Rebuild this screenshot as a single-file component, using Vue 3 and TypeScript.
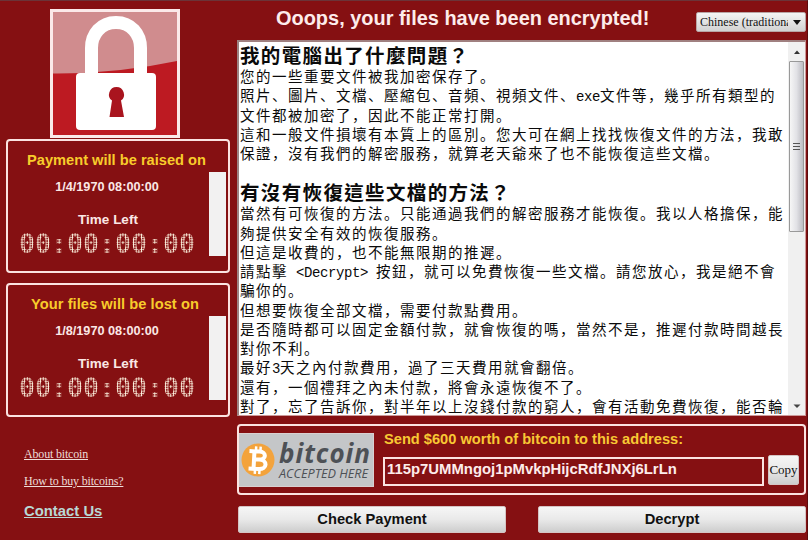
<script setup lang="ts">
interface Timer { title: string; date: string; left: string }
interface Section { heading: string; lines: string[] }
interface Run { text: string; latin: boolean }

const timers: Timer[] = [
  { title: 'Payment will be raised on', date: '1/4/1970 08:00:00', left: '00:00:00:00' },
  { title: 'Your files will be lost on', date: '1/8/1970 08:00:00', left: '00:00:00:00' },
]

const sections: Section[] = [
  {
    heading: '我的電腦出了什麼問題？',
    lines: [
      '您的一些重要文件被我加密保存了。',
      '照片、圖片、文檔、壓縮包、音頻、視頻文件、exe文件等，幾乎所有類型的',
      '文件都被加密了，因此不能正常打開。',
      '這和一般文件損壞有本質上的區別。您大可在網上找找恢復文件的方法，我敢',
      '保證，沒有我們的解密服務，就算老天爺來了也不能恢復這些文檔。',
    ],
  },
  {
    heading: '有沒有恢復這些文檔的方法？',
    lines: [
      '當然有可恢復的方法。只能通過我們的解密服務才能恢復。我以人格擔保，能',
      '夠提供安全有效的恢復服務。',
      '但這是收費的，也不能無限期的推遲。',
      '請點擊 <Decrypt> 按鈕，就可以免費恢復一些文檔。請您放心，我是絕不會',
      '騙你的。',
      '但想要恢復全部文檔，需要付款點費用。',
      '是否隨時都可以固定金額付款，就會恢復的嗎，當然不是，推遲付款時間越長',
      '對你不利。',
      '最好3天之內付款費用，過了三天費用就會翻倍。',
      '還有，一個禮拜之內未付款，將會永遠恢復不了。',
      '對了，忘了告訴你，對半年以上沒錢付款的窮人，會有活動免費恢復，能否輪',
    ],
  },
]

const runs = (line: string): Run[] =>
  (line.match(/[ -~]+|[^ -~]+/g) ?? []).map((text) => ({ text, latin: /^[ -~]/.test(text) }))
</script>

<template>
  <main class="window">
    <aside class="side">
      <svg class="lock" viewBox="0 0 130 129">
        <rect width="130" height="129" fill="#fbe9e9" />
        <rect x="3" y="3" width="124" height="123" fill="#bd1a22" />
        <path d="M3 3H127V52Q66 65 3 64.500Z" fill="#d08c8e" />
        <path d="M41.500 66V39C41.500 25 51 13.500 66 13.500S90.500 25 90.500 39V66" fill="none" stroke="#fff" stroke-width="13" />
        <rect x="26" y="64" width="80" height="57" rx="4" fill="#fff" />
        <path d="M66.500 78a7.500 7.500 0 0 1 4.500 13.500L74 108H59.500L62 91.500A7.500 7.500 0 0 1 66.500 78Z" fill="#a9141e" />
      </svg>

      <section v-for="t in timers" :key="t.title" class="timer">
        <div class="timer-info">
          <h2>{{ t.title }}</h2>
          <p class="date">{{ t.date }}</p>
          <p class="label">Time Left</p>
          <p class="clock">{{ t.left }}</p>
        </div>
        <div class="gauge"></div>
      </section>

      <nav class="links">
        <a class="about">About bitcoin</a>
        <a class="how">How to buy bitcoins?</a>
        <a class="contact">Contact Us</a>
      </nav>
    </aside>

    <div class="content">
      <header class="top">
        <h1>Ooops, your files have been encrypted!</h1>
        <div class="select">
          <span class="select-text">Chinese (traditional)</span>
          <svg class="caret" viewBox="0 0 8 5"><path d="M0 0H8L4 5Z" fill="#111" /></svg>
        </div>
      </header>

      <div class="message">
        <article class="text">
          <section v-for="s in sections" :key="s.heading" class="block">
            <h3>{{ s.heading }}</h3>
            <p v-for="line in s.lines" :key="line"><span
              v-for="(r, i) in runs(line)" :key="i" :class="{ latin: r.latin }">{{ r.text }}</span></p>
          </section>
        </article>
        <div class="scrollbar">
          <svg class="arrow" viewBox="0 0 16 19"><path d="M5 12L8 8.500L11 12Z" fill="#333" /></svg>
          <div class="thumb"><i></i><i></i><i></i></div>
          <svg class="arrow" viewBox="0 0 16 19"><path d="M4.500 8.500L8 12L11.500 8.500Z" fill="#444" /></svg>
        </div>
      </div>

      <section class="payment">
        <div class="bitcoin">
          <svg class="coin" viewBox="0 0 34 36">
            <circle cx="17" cy="18" r="16.500" fill="#f3a33c" />
            <g fill="none" stroke="#fff" transform="rotate(3 17 18)">
              <path d="M8 9.500H18C25.500 9.500 25.500 17.500 18 17.500H13.500M18 17.500C27 17.500 27 27 18 27H8M13 9.500V27" stroke-width="4" />
              <path d="M14.500 4.500V9M19 4.500V9M14.500 27V32M19 27V32" stroke-width="2.500" />
            </g>
          </svg>
          <div class="bitcoin-text"><b>bitcoin</b><span>ACCEPTED HERE</span></div>
        </div>
        <div class="pay-info">
          <h2>Send $600 worth of bitcoin to this address:</h2>
          <div class="pay-row">
            <div class="address">115p7UMMngoj1pMvkpHijcRdfJNXj6LrLn</div>
            <button class="copy">Copy</button>
          </div>
        </div>
      </section>

      <footer class="actions">
        <button class="action">Check Payment</button>
        <button class="action">Decrypt</button>
      </footer>
    </div>
  </main>
</template>

<style>
body { margin: 0; background: #851012; }
</style>

<style scoped>
* { box-sizing: border-box; }
h1, h2, h3, p { margin: 0; }
.window {
  width: 808px; height: 540px; overflow: hidden; display: flex;
  background: #851012; color: #fff;
  border-top: 1px solid #6b3438; border-right: 1px solid #5d0b0d;
  font-family: "Liberation Sans", Arial, sans-serif; white-space: nowrap;
}
.side { width: 237px; flex: none; padding: 8px 7px 0 6px; display: flex; flex-direction: column; }
.lock { width: 130px; height: 129px; margin-left: 44px; flex: none; display: block; }
.timer {
  height: 134px; margin-top: 1px; flex: none; border: 2px solid #fbe3e1; border-radius: 4px;
  display: flex; justify-content: space-between; padding-right: 2px;
}
.timer + .timer { margin-top: 10px; }
.timer-info { width: 198px; }
.timer h2 { font-size: 14.650px; line-height: 18px; margin-top: 10px; width: 217px; color: #f8cc2b; text-align: center; }
.timer + .timer h2 { width: 214px; letter-spacing: 0.050px; }
.date { font-size: 12.700px; font-weight: bold; line-height: 14px; margin-top: 11px; text-align: center; color: #fbe7e5; }
.label { font-size: 13.500px; font-weight: bold; line-height: 16px; margin-top: 18px; padding-left: 2px; text-align: center; color: #fbe7e5; }
.clock {
  font: bold 26.580px/26px "DejaVu Sans Mono", monospace; margin: 3px 0 0 11px; color: transparent;
  background: radial-gradient(circle at center, #fff6e2 0.800px, transparent 1.250px) 1.667px 2.670px / 2.667px 2.460px;
  -webkit-background-clip: text; background-clip: text;
}
.gauge { width: 17px; height: 84px; margin-top: 31px; background: #f2f1f1; }
.links { display: flex; flex-direction: column; align-items: flex-start; padding: 30px 0 0 18px; }
.links a { text-decoration: underline; color: #eedcd8; }
.about, .how { font: 12px/15px "Liberation Serif", serif; letter-spacing: -0.180px; margin-bottom: 12px; }
.links .contact { font-size: 14.850px; line-height: 18px; font-weight: bold; margin-top: 1px; color: #b9d8d5; }

.content { flex: 1; min-width: 0; padding-right: 1px; display: flex; flex-direction: column; }
.top { height: 39px; display: flex; justify-content: space-between; padding-left: 39px; }
h1 { font-size: 19.950px; line-height: 24px; margin-top: 5px; color: #fdeceb; }
.select {
  width: 110px; height: 20px; margin-top: 11px; padding: 0 4px 0 3px; display: flex; align-items: center;
  justify-content: space-between; color: #111; background: linear-gradient(#f4f4f4, #d2d2d2);
  border: 1px solid #b9a5a5; border-radius: 2px;
}
.select-text { width: 88px; overflow: hidden; font: 12px/16px "Liberation Serif", serif; }
.caret { width: 8px; height: 5px; }
.message {
  height: 376px; flex: none; display: flex; background: #fff; border: 1px solid #c99;
  border-left: 2px solid #9c8282; border-top: 2px solid #a08080;
}
.text {
  flex: 1; min-width: 0; overflow: hidden; padding: 2px 0 0 1px; color: #0a0a0a;
  font: 14.500px/19.250px "Noto Sans CJK SC", sans-serif; letter-spacing: 1.500px;
}
.text h3 { font: 700 19.500px/22px "Noto Sans CJK TC", sans-serif; letter-spacing: 1.350px; }
.text p { height: 19.250px; white-space: pre; }
.block + .block { margin-top: 19px; }
.latin { font: 14px/19px "Liberation Mono", monospace; letter-spacing: -0.402px; }
.scrollbar { width: 17px; background: #f0f0f0; display: flex; flex-direction: column; align-items: center; }
.arrow { width: 16px; height: 19px; flex: none; }
.thumb {
  width: 15px; height: 171px; margin-bottom: auto; border: 1px solid #999; border-radius: 1px;
  background: linear-gradient(90deg, #f6f6f6, #e2e2e6 50%, #bcbcc2);
  display: flex; flex-direction: column; gap: 2px; align-items: center; justify-content: center;
}
.thumb i { width: 7px; height: 1px; background: #555; }
.payment {
  height: 71px; margin-top: 8px; flex: none; display: flex; gap: 9px; padding-top: 7px;
  border: 2px solid #fbe3e1; border-radius: 4px;
}
.bitcoin { width: 135px; height: 54px; flex: none; background: #c4c6c8; border: 1px solid #d9d0d0; border-left: 0; display: flex; align-items: center; }
.coin { width: 34px; height: 36px; margin-left: 2px; flex: none; }
.bitcoin-text { margin-left: 4px; color: #4d5156; font-family: "Open Sans", sans-serif; font-style: italic; }
.bitcoin-text b { display: block; font-size: 26px; line-height: 26px; letter-spacing: 1px; }
.bitcoin-text span { display: block; font-size: 12.650px; line-height: 15px; }
.payment h2 { font-size: 14.630px; line-height: 16px; margin-top: -2px; padding-left: 1px; color: #f8c834; }
.pay-row { display: flex; gap: 4px; align-items: flex-start; margin-top: 8px; }
.address {
  width: 381px; height: 29px; margin-top: 2px; border: 2px solid #fbe3e1; padding-left: 2px;
  font-size: 14.870px; font-weight: bold; line-height: 21px; color: #fdeceb;
}
button { padding: 0; border: 1px solid #d5c4c4; border-radius: 2px; background: linear-gradient(#f6f6f6, #e9e9e9 50%, #cdcdcd); color: #111; }
.copy { width: 31px; height: 30px; font: 13px "Liberation Serif", serif; }
.actions { display: flex; justify-content: space-between; padding-left: 1px; margin-top: 11px; }
.action { width: 268px; height: 27px; font: bold 14.700px "Liberation Sans", Arial, sans-serif; padding-bottom: 2px; }
</style>
